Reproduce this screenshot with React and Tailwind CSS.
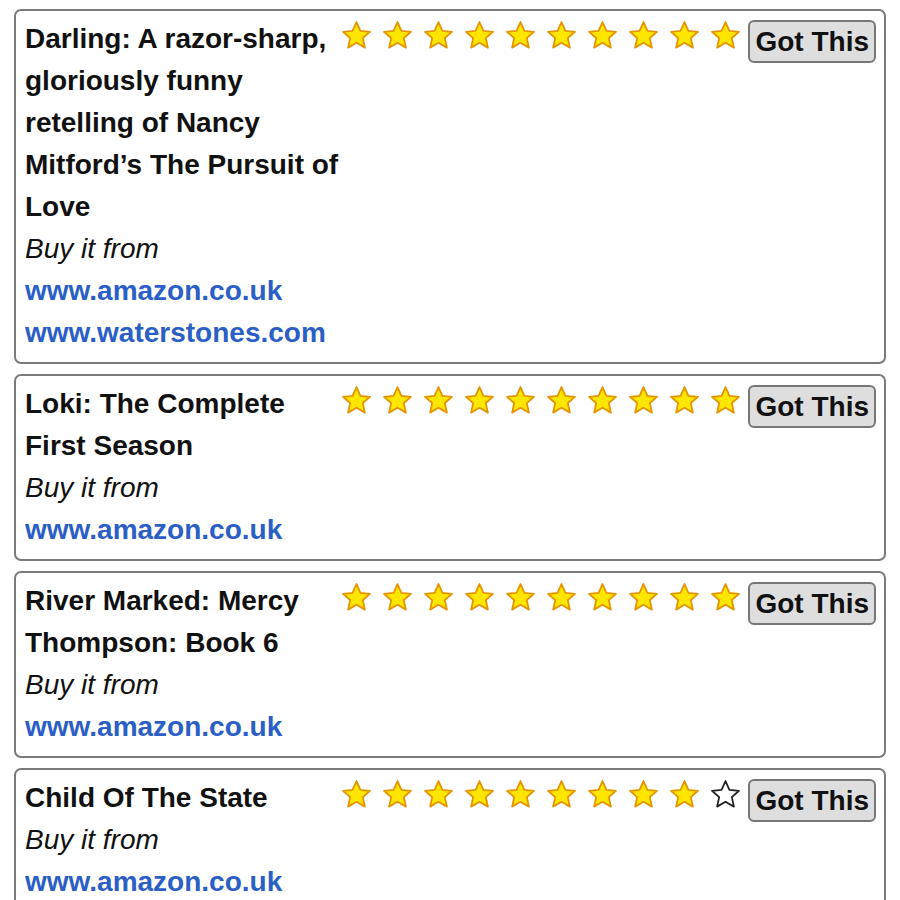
import React from 'react';

const books = [
  {
    title: 'Darling: A razor-sharp, gloriously funny retelling of Nancy Mitford’s The Pursuit of Love',
    rating: 10,
    links: ['www.amazon.co.uk', 'www.waterstones.com'],
  },
  { title: 'Loki: The Complete First Season', rating: 10, links: ['www.amazon.co.uk'] },
  { title: 'River Marked: Mercy Thompson: Book 6', rating: 10, links: ['www.amazon.co.uk'] },
  { title: 'Child Of The State', rating: 9, links: ['www.amazon.co.uk'] },
];

const Star = ({ filled }) => (
  <svg width="33" height="33" viewBox="0 0 24 24" className="shrink-0">
    <path
      d="M12 2.2l2.85 6.4 6.95.7-5.2 4.65 1.5 6.85L12 17.3l-6.1 3.5 1.5-6.85-5.2-4.65 6.95-.7z"
      fill={filled ? '#ffe600' : '#ffffff'}
      stroke={filled ? '#e59400' : '#222222'}
      strokeWidth="1.3"
      strokeLinejoin="round"
    />
  </svg>
);

const BookCard = ({ book }) => (
  <div className="mx-[14px] mb-[10px] rounded-[7px] border-2 border-[#7b7b7b] bg-white pt-[7px] pb-[8px] pl-[9px] pr-[8px]">
    <div className="flex items-start">
      <div className="w-[315px] shrink-0">
        <div className="font-bold text-[#111]">{book.title}</div>
        <div className="italic text-[#111]">Buy it from</div>
        {book.links.map((l) => (
          <div key={l}>
            <a className="font-bold text-[#2b5fc6]">{l}</a>
          </div>
        ))}
      </div>
      <div className="flex items-center gap-[8px] pt-[1px]">
        {Array.from({ length: 10 }).map((_, i) => (
          <Star key={i} filled={i < book.rating} />
        ))}
      </div>
      <button className="ml-auto mt-[2px] h-[43px] shrink-0 whitespace-nowrap rounded-[6px] border-2 border-[#777] bg-[#dedede] px-[5px] font-bold leading-none text-[#111]">
        Got This
      </button>
    </div>
  </div>
);

export default function App() {
  return (
    <div
      className="min-h-[900px] bg-white pt-[9px] text-[28px] leading-[42px]"
      style={{ fontFamily: '"Liberation Sans", Arial, sans-serif' }}
    >
      {books.map((b) => (
        <BookCard key={b.title} book={b} />
      ))}
    </div>
  );
}
